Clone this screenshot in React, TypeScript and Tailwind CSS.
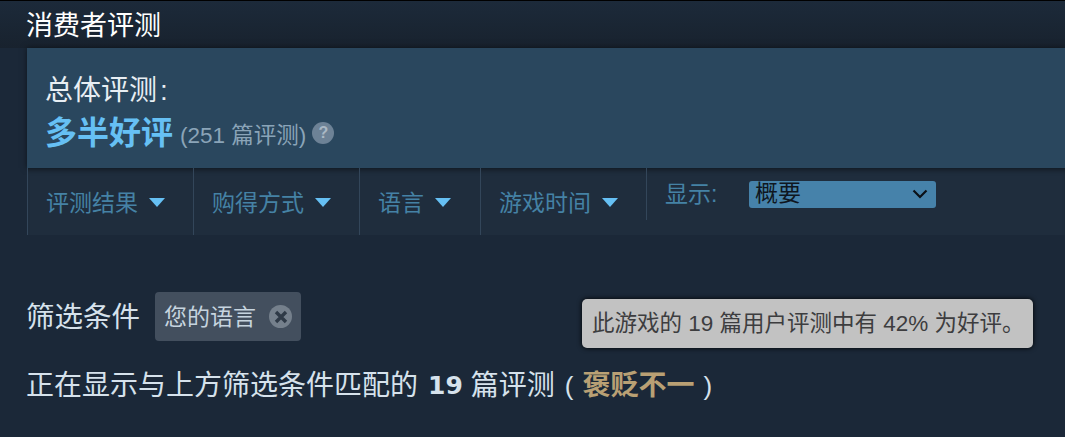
export default function App() {
  const tabs = [
    { label: "评测结果", w: "w-[166px]" },
    { label: "购得方式", w: "w-[166px]" },
    { label: "语言", w: "w-[121px]" },
    { label: "游戏时间", w: "w-[166px]" },
  ];
  const cjk = "font-['Liberation_Sans','Noto_Sans_CJK_SC',sans-serif]";
  return (
    <div className={`relative h-[437px] w-[1065px] overflow-hidden bg-[#1b2838] ${cjk}`}>
      <div className="h-[1px] bg-black" />
      <div className="h-[47px] bg-gradient-to-b from-[#1c2a3a] to-[#18222e] pl-[26px] pt-[6px]">
        <div className="text-[27px] leading-[38px] text-white">消费者评测</div>
      </div>
      <div className="ml-[27px] h-[120px] bg-[#2a475e] pl-[18px] pt-[25px] shadow-[0_0_6px_rgba(0,0,0,0.5)]">
        <div className="flex text-[28px] leading-[36px] text-[#e8eef3]">
          <span>总体评测</span>
          <span className="ml-[3px]">:</span>
        </div>
        <div className="mt-[3px] flex items-center">
          <span className="text-[32px] font-bold leading-[42px] text-[#66c0f4]">多半好评</span>
          <span className="ml-[7px] mt-[5px] text-[22.5px] leading-[32px] text-[#8aa4b8]">(251 篇评测)</span>
          <span className="ml-[6px] flex h-[22px] w-[22px] items-center justify-center rounded-full bg-[#6d8296] text-[16px] font-bold leading-none text-[#aab8c4]">?</span>
        </div>
      </div>
      <div className="ml-[27px] flex h-[67px] bg-[#1f2d3d] shadow-[inset_0_5px_5px_-3px_rgba(0,0,0,0.45)]">
        {tabs.map((t) => (
          <div key={t.label} className={`flex ${t.w} items-center border-l border-[#33465a] pl-[18px] pt-[2px]`}>
            <span className="text-[23px] leading-[32px] text-[#4582a5]">{t.label}</span>
            <svg className="ml-[11px]" width="16" height="9" viewBox="0 0 16 9">
              <path d="M0 0H16L8 9Z" fill="#66c0f4" />
            </svg>
          </div>
        ))}
        <div className="flex h-[52px] items-center border-l border-[#33465a] pl-[18px]">
          <span className="w-[84px] text-[23px] leading-[32px] text-[#4582a5]">显示:</span>
          <div className="flex h-[27px] w-[187px] items-center justify-between rounded-[3px] bg-[#4682aa] pl-[6px] pr-[8px]">
            <span className="-mt-[1px] text-[23px] leading-[27px] text-[#0f1620]">概要</span>
            <svg width="16" height="10" viewBox="0 0 16 10" fill="none">
              <path d="M1.5 1.5L8 8L14.5 1.5" stroke="#0b1017" strokeWidth="2.2" />
            </svg>
          </div>
        </div>
      </div>
      <div className="ml-[27px] mt-[56px] flex items-center">
        <span className="-ml-[1px] pt-[2px] text-[28.5px] leading-[49px] text-[#d6e2ec]">筛选条件</span>
        <div className="ml-[15px] flex h-[49px] w-[146px] items-center rounded-[4px] bg-[#434f5e] pl-[9px]">
          <span className="text-[23px] leading-[32px] text-[#c6d4df]">您的语言</span>
          <span className="ml-[13px] flex h-[23px] w-[23px] items-center justify-center rounded-full bg-[#75808c]">
            <svg width="14" height="14" viewBox="0 0 14 14">
              <path d="M2 2L12 12M12 2L2 12" stroke="#2f3a47" strokeWidth="3.4" />
            </svg>
          </span>
        </div>
      </div>
      <div className="ml-[26px] mt-[24px] flex items-center whitespace-pre text-[28px] leading-[40px] text-[#d6e2ec]">
        <span>正在显示与上方筛选条件匹配的</span>
        <span className="ml-[10px] font-['DejaVu_Sans',sans-serif] text-[25px] font-bold text-[#d6e2ec]">19</span>
        <span className="ml-[8px]">篇评测</span>
        <span className="ml-[10px] font-['Liberation_Sans',sans-serif] text-[26px]">(</span>
        <span className="ml-[9px] font-bold text-[#b9a074]">褒贬不一</span>
        <span className="ml-[9px] font-['Liberation_Sans',sans-serif] text-[26px]">)</span>
      </div>
      <div className="absolute left-[582px] top-[299px] flex h-[49px] w-[451px] items-center whitespace-nowrap rounded-[5px] bg-[#c2c2c2] pl-[10px] text-[22.5px] leading-[32px] text-[#3d3d3f] shadow-[0_0_5px_#000]">
        此游戏的 19 篇用户评测中有 42% 为好评。
      </div>
    </div>
  );
}
